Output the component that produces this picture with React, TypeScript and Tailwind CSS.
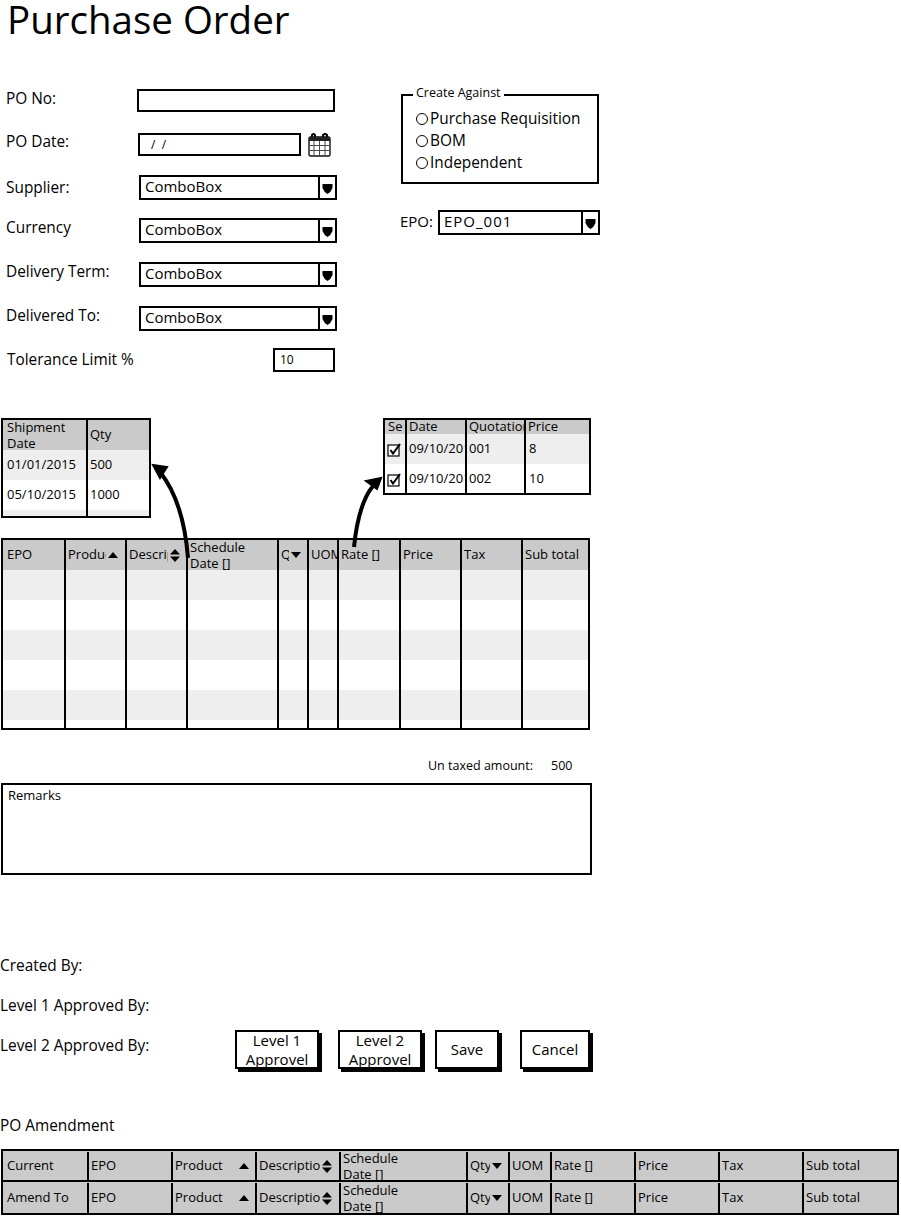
const CaretUp = () => (
  <svg width="10" height="6" viewBox="0 0 10 6" className="shrink-0">
    <path d="M0 6 L5 0 L10 6 Z" fill="#000" />
  </svg>
);

const CaretDown = () => (
  <svg width="10" height="6" viewBox="0 0 10 6" className="shrink-0">
    <path d="M0 0 L10 0 L5 6 Z" fill="#000" />
  </svg>
);

const CaretBoth = () => (
  <svg width="10" height="13" viewBox="0 0 10 13" className="shrink-0">
    <path d="M0 5.5 L5 0 L10 5.5 Z M0 7.5 L10 7.5 L5 13 Z" fill="#000" />
  </svg>
);

const CalendarIcon = () => (
  <svg width="23" height="24" viewBox="0 0 23 24" className="ml-[7px]">
    <path d="M4 4 V2 Q6 0 7 2 V4 M15 4 V2 Q17 0 19 2 V4" fill="none" stroke="#000" strokeWidth="2" />
    <rect x="1" y="4" width="21" height="19" rx="1.5" fill="#fff" stroke="#111" strokeWidth="1.4" />
    <rect x="1" y="4" width="21" height="4" fill="#222" />
    <path
      d="M6 8 V23 M11.5 8 V23 M17 8 V23 M1 12.5 H22 M1 17.5 H22"
      fill="none"
      stroke="#4b4b4b"
      strokeWidth="1"
    />
  </svg>
);

const Combo = ({ value, className }: { value: string; className: string }) => (
  <div className={`flex h-[25px] items-center border-2 border-black bg-white ${className}`}>
    <span className="flex-1 pb-[2px] pl-[4px]">{value}</span>
    <span className="flex h-full w-[17px] items-center justify-center border-l-2 border-black">
      <svg width="11" height="12" viewBox="0 0 11 12">
        <path d="M0.5 2 H10.5 V6 Q9 10 5.5 12 Q2 10 0.5 6 Z" fill="#000" />
      </svg>
    </span>
  </div>
);

const Radio = ({ label }: { label: string }) => (
  <div className="flex h-[22px] items-center gap-[2px] text-[15.4px]">
    <span className="h-[12px] w-[12px] rounded-full border border-black" />
    <span>{label}</span>
  </div>
);

const Check = () => (
  <svg width="15" height="15" viewBox="0 0 15 15">
    <rect x="1" y="3" width="11" height="11" fill="#fff" stroke="#000" strokeWidth="1.2" />
    <path d="M3.5 8 L6 11.5 L13 2" fill="none" stroke="#000" strokeWidth="2" />
  </svg>
);

const Cell = ({ children, first }: { children?: React.ReactNode; first?: boolean }) => (
  <div
    className={`flex h-full items-center gap-[2px] overflow-hidden whitespace-nowrap pl-[2px] ${
      first ? "" : "border-l-2 border-black"
    }`}
  >
    {children}
  </div>
);

const Clip = ({ children }: { children: React.ReactNode }) => (
  <span className="min-w-0 flex-1 overflow-hidden">{children}</span>
);

const ScheduleHead = () => (
  <span className="whitespace-normal leading-[16px]">
    Schedule
    <br />
    Date []
  </span>
);

const mainHeader = [
  <span className="pl-[2px]">EPO</span>,
  <>
    <Clip>Product</Clip>
    <CaretUp />
    <span className="w-[5px] shrink-0" />
  </>,
  <>
    <Clip>Descript</Clip>
    <CaretBoth />
    <span className="w-[4px] shrink-0" />
  </>,
  <ScheduleHead />,
  <>
    <Clip>Qty</Clip>
    <CaretDown />
    <span className="w-[4px] shrink-0" />
  </>,
  <Clip>UOM</Clip>,
  <span>Rate []</span>,
  <span>Price</span>,
  <span>Tax</span>,
  <span>Sub total</span>,
];

const MainTable = () => (
  <div className="ml-[1px] mt-[20px] h-[192px] w-[589px] overflow-hidden border-2 border-black text-[13px]">
    <div className="grid h-[30px] grid-cols-[61px_61px_61px_91px_30px_30px_62px_61px_61px_67px] bg-[#cacaca]">
      {mainHeader.map((cell, i) => (
        <Cell key={i} first={i === 0}>
          {cell}
        </Cell>
      ))}
    </div>
    {["bg-[#eeeeee]", "bg-white", "bg-[#eeeeee]", "bg-white", "bg-[#eeeeee]", "bg-white"].map((bg, r) => (
      <div key={r} className={`grid h-[30px] grid-cols-[61px_61px_61px_91px_30px_30px_62px_61px_61px_67px] ${bg}`}>
        {mainHeader.map((_, i) => (
          <Cell key={i} first={i === 0} />
        ))}
      </div>
    ))}
  </div>
);

const ShipmentTable = () => (
  <div className="ml-[1px] h-[100px] w-[150px] overflow-hidden border-2 border-black text-[13px]">
    <div className="grid h-[30px] grid-cols-[83px_63px] bg-[#cacaca]">
      <Cell first>
        <span className="whitespace-normal pl-[2px] leading-[16px]">
          Shipment
          <br />
          Date
        </span>
      </Cell>
      <Cell>
        <span>Qty</span>
      </Cell>
    </div>
    {[
      ["01/01/2015", "500", "bg-[#eeeeee]"],
      ["05/10/2015", "1000", "bg-white"],
      ["", "", "bg-[#eeeeee]"],
    ].map(([date, qty, bg]) => (
      <div key={bg + date} className={`grid h-[30px] grid-cols-[83px_63px] ${bg}`}>
        <Cell first>
          <span className="pl-[2px]">{date}</span>
        </Cell>
        <Cell>{qty}</Cell>
      </div>
    ))}
  </div>
);

const QuotationTable = () => (
  <div className="ml-[232px] h-[77px] w-[208px] overflow-hidden border-2 border-black text-[13px]">
    <div className="grid h-[14px] grid-cols-[20px_60px_59px_65px] bg-[#cacaca]">
      <Cell first>
        <span className="pl-[1px]">Se</span>
      </Cell>
      <Cell>
        <span>Date</span>
      </Cell>
      <Cell>
        <Clip>Quotation</Clip>
      </Cell>
      <Cell>Price</Cell>
    </div>
    {[
      ["001", "8", "bg-[#eeeeee]"],
      ["002", "10", "bg-white"],
    ].map(([no, price, bg]) => (
      <div key={no} className={`grid h-[30px] grid-cols-[20px_60px_59px_65px] ${bg}`}>
        <Cell first>
          <Check />
        </Cell>
        <Cell>
          <Clip>09/10/2015</Clip>
        </Cell>
        <Cell>{no}</Cell>
        <Cell>
          <span className="pl-[1px]">{price}</span>
        </Cell>
      </div>
    ))}
  </div>
);

const Arrows = () => (
  <svg width="400" height="150" viewBox="0 0 400 150" className="pointer-events-none absolute left-0 top-0" fill="none">
    {/* origin of this drawing is page y=418 */}
    <path d="M188 140 C185 102 176 74 160 54" stroke="#000" strokeWidth="4" />
    <path d="M153 47 L167 49 L160 60 Z" fill="#000" stroke="#000" strokeWidth="2" />
    <path d="M354 129 C357 100 363 80 373 68" stroke="#000" strokeWidth="4" />
    <path d="M381 60 L366 63 L377 71 Z" fill="#000" stroke="#000" strokeWidth="2" />
  </svg>
);

const amendColumns = (name: string) => [
  <span className="pl-[2px]">{name}</span>,
  <span>EPO</span>,
  <>
    <span className="flex-1">Product</span>
    <CaretUp />
    <span className="w-[4px] shrink-0" />
  </>,
  <>
    <Clip>Description</Clip>
    <CaretBoth />
    <span className="w-[5px] shrink-0" />
  </>,
  <ScheduleHead />,
  <>
    <Clip>Qty</Clip>
    <CaretDown />
    <span className="w-[4px] shrink-0" />
  </>,
  <span>UOM</span>,
  <span>Rate []</span>,
  <span>Price</span>,
  <span>Tax</span>,
  <span>Sub total</span>,
];

const AmendTable = () => (
  <div className="ml-[1px] mt-[13px] w-[898px] border-2 border-black bg-[#cacaca] text-[13px]">
    {["Current", "Amend To"].map((name, r) => (
      <div
        key={name}
        className={`grid h-[31px] grid-cols-[84px_84px_84px_84px_127px_42px_42px_84px_84px_84px_95px] pt-[1px] ${
          r === 0 ? "border-b-2 border-black" : ""
        }`}
      >
        {amendColumns(name).map((cell, i) => (
          <Cell key={i} first={i === 0}>
            {cell}
          </Cell>
        ))}
      </div>
    ))}
  </div>
);

const ActionButton = ({ className, children }: { className: string; children: React.ReactNode }) => (
  <button
    className={`flex h-[39px] items-center justify-center border-2 border-black bg-white text-center text-[15px] leading-[19px] shadow-[3px_3px_0_#000] ${className}`}
  >
    {children}
  </button>
);

export default function App() {
  return (
    <div className="relative h-[1218px] w-[901px] overflow-hidden bg-white font-['Open_Sans',sans-serif] text-black">
      <h1 className="ml-[7px] h-[42px] text-[38.5px] font-medium leading-[38px]">Purchase Order</h1>

      {/* formulário + Create Against */}
      <div className="flex">
        <div className="w-[400px] text-[15.4px]">
          <div className="ml-[6px] mt-[47px] flex h-[23px] w-[329px] items-center justify-between">
            <span className="pb-[4px]">PO No:</span>
            <div className="h-[23px] w-[198px] border-2 border-black" />
          </div>
          <div className="ml-[6px] mt-[21px] flex h-[23px] items-center">
            <span className="w-[132px] pb-[6px]">PO Date:</span>
            <div className="flex h-[23px] w-[163px] items-center border-2 border-black pl-[11px] text-[12px]">/ &nbsp;/</div>
            <CalendarIcon />
          </div>
          {[
            ["Supplier:", "mt-[19px]", ""],
            ["Currency", "mt-[18px]", "pb-[6px]"],
            ["Delivery Term:", "mt-[19px]", "pb-[6px]"],
            ["Delivered To:", "mt-[19px]", "pb-[6px]"],
          ].map(([label, mt, pb]) => (
            <div key={label} className={`ml-[6px] flex h-[25px] items-center ${mt}`}>
              <span className={`w-[133px] ${pb}`}>{label}</span>
              <Combo value="ComboBox" className="w-[198px] text-[15px]" />
            </div>
          ))}
          <div className="ml-[7px] mt-[17px] flex h-[24px] w-[328px] items-center justify-between">
            <span className="pb-[1px]">Tolerance Limit %</span>
            <div className="flex h-[24px] w-[62px] items-center border-2 border-black pl-[5px] text-[12px]">10</div>
          </div>
        </div>

        <div className="w-[200px]">
          <fieldset className="ml-[1px] mt-[44px] h-[98px] w-[198px] border-2 border-black pl-[13px]">
            <legend className="-ml-[3px] -translate-y-[2px] px-[3px] text-[12.5px] leading-[17px]">Create Against</legend>
            <div className="mt-[5px]">
              <Radio label="Purchase Requisition" />
              <Radio label="BOM" />
              <Radio label="Independent" />
            </div>
          </fieldset>
          <div className="mt-[26px] flex h-[25px] items-center">
            <span className="w-[38px] pb-[3px] text-[15px]">EPO:</span>
            <Combo value="EPO_001" className="w-[162px] text-[15px] tracking-[1px]" />
          </div>
        </div>
      </div>

      {/* tabelas */}
      <div className="relative mt-[46px]">
        <div className="flex items-start">
          <ShipmentTable />
          <QuotationTable />
        </div>
        <MainTable />
        <Arrows />
      </div>

      <div className="mt-[26px] flex h-[20px] items-center text-[12.5px]">
        <span className="ml-[428px] w-[123px]">Un taxed amount:</span>
        <span>500</span>
      </div>

      <div className="ml-[1px] mt-[7px] h-[92px] w-[591px] border-2 border-black pl-[5px] pt-[1px] text-[13px]">Remarks</div>

      <div className="mt-[81px] h-[20px] text-[15.4px] leading-[20px]">Created By:</div>
      <div className="mt-[20px] h-[20px] text-[15.4px] leading-[20px]">Level 1 Approved By:</div>
      <div className="mt-[14px] flex h-[40px] items-start text-[15.4px]">
        <span className="w-[235px] pt-[6px] leading-[20px]">Level 2 Approved By:</span>
        <ActionButton className="w-[84px]">
          Level 1
          <br />
          Approvel
        </ActionButton>
        <ActionButton className="ml-[19px] w-[84px]">
          Level 2
          <br />
          Approvel
        </ActionButton>
        <ActionButton className="ml-[13px] w-[64px]">Save</ActionButton>
        <ActionButton className="ml-[21px] w-[70px]">Cancel</ActionButton>
      </div>

      <div className="mt-[46px] h-[20px] text-[15.4px] leading-[20px]">PO Amendment</div>
      <AmendTable />
    </div>
  );
}
